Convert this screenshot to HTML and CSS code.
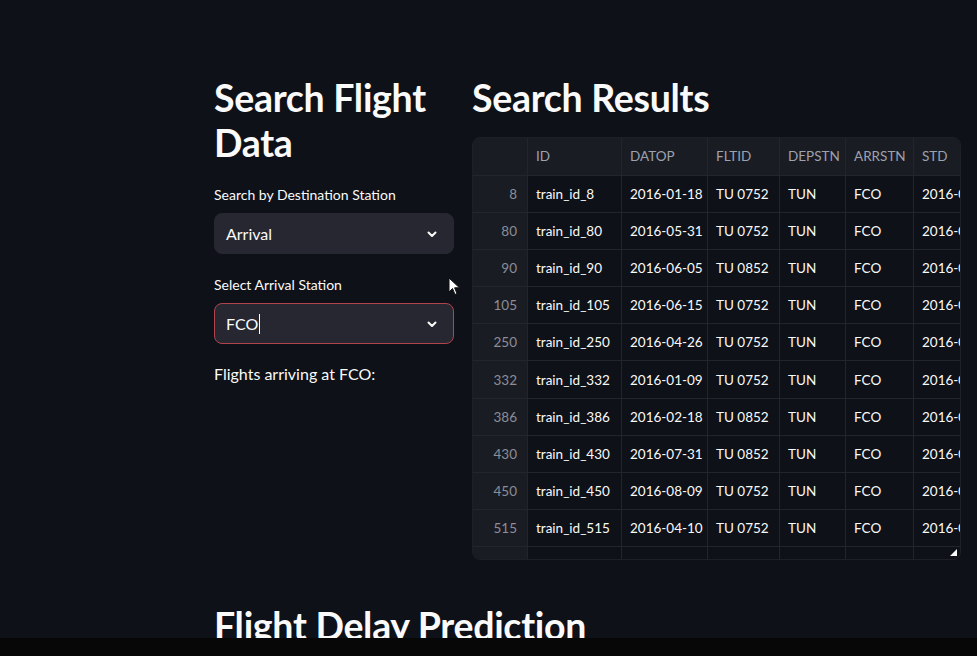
FILE: index.html
```html
<!DOCTYPE html>
<html>
<head>
<meta charset="utf-8">
<link rel="stylesheet" href="styles.css">
</head>
<body>
<div class="app">
  <main class="main">
    <div class="columns">
      <section class="col-left">
        <h2 class="heading">Search Flight Data</h2>
        <label class="label">Search by Destination Station</label>
        <div class="select">
          <span class="select-value">Arrival</span>
          <svg class="chevron" width="14" height="14" viewBox="0 0 14 14"><path d="M3.5 5.5 L7 9 L10.5 5.5" fill="none" stroke="#fafafa" stroke-width="2" stroke-linecap="round" stroke-linejoin="round"/></svg>
        </div>
        <label class="label label-second">Select Arrival Station</label>
        <div class="select select-focus">
          <span class="select-value">FCO<span class="caret"></span></span>
          <svg class="chevron" width="14" height="14" viewBox="0 0 14 14"><path d="M3.5 5.5 L7 9 L10.5 5.5" fill="none" stroke="#fafafa" stroke-width="2" stroke-linecap="round" stroke-linejoin="round"/></svg>
        </div>
        <p class="text">Flights arriving at FCO:</p>
      </section>
      <section class="col-right">
        <h2 class="heading">Search Results</h2>
        <div class="table">
          <div class="row head">
            <div class="cell idx"></div><div class="cell">ID</div><div class="cell">DATOP</div><div class="cell">FLTID</div><div class="cell">DEPSTN</div><div class="cell">ARRSTN</div><div class="cell">STD</div>
          </div>
          <div class="row"><div class="cell idx">8</div><div class="cell">train_id_8</div><div class="cell">2016-01-18</div><div class="cell">TU 0752</div><div class="cell">TUN</div><div class="cell">FCO</div><div class="cell">2016-01-18</div></div>
          <div class="row"><div class="cell idx">80</div><div class="cell">train_id_80</div><div class="cell">2016-05-31</div><div class="cell">TU 0752</div><div class="cell">TUN</div><div class="cell">FCO</div><div class="cell">2016-05-31</div></div>
          <div class="row"><div class="cell idx">90</div><div class="cell">train_id_90</div><div class="cell">2016-06-05</div><div class="cell">TU 0852</div><div class="cell">TUN</div><div class="cell">FCO</div><div class="cell">2016-06-05</div></div>
          <div class="row"><div class="cell idx">105</div><div class="cell">train_id_105</div><div class="cell">2016-06-15</div><div class="cell">TU 0752</div><div class="cell">TUN</div><div class="cell">FCO</div><div class="cell">2016-06-15</div></div>
          <div class="row"><div class="cell idx">250</div><div class="cell">train_id_250</div><div class="cell">2016-04-26</div><div class="cell">TU 0752</div><div class="cell">TUN</div><div class="cell">FCO</div><div class="cell">2016-04-26</div></div>
          <div class="row"><div class="cell idx">332</div><div class="cell">train_id_332</div><div class="cell">2016-01-09</div><div class="cell">TU 0752</div><div class="cell">TUN</div><div class="cell">FCO</div><div class="cell">2016-01-09</div></div>
          <div class="row"><div class="cell idx">386</div><div class="cell">train_id_386</div><div class="cell">2016-02-18</div><div class="cell">TU 0852</div><div class="cell">TUN</div><div class="cell">FCO</div><div class="cell">2016-02-18</div></div>
          <div class="row"><div class="cell idx">430</div><div class="cell">train_id_430</div><div class="cell">2016-07-31</div><div class="cell">TU 0852</div><div class="cell">TUN</div><div class="cell">FCO</div><div class="cell">2016-07-31</div></div>
          <div class="row"><div class="cell idx">450</div><div class="cell">train_id_450</div><div class="cell">2016-08-09</div><div class="cell">TU 0752</div><div class="cell">TUN</div><div class="cell">FCO</div><div class="cell">2016-08-09</div></div>
          <div class="row"><div class="cell idx">515</div><div class="cell">train_id_515</div><div class="cell">2016-04-10</div><div class="cell">TU 0752</div><div class="cell">TUN</div><div class="cell">FCO</div><div class="cell">2016-04-10</div></div>
          <div class="row"><div class="cell idx"></div><div class="cell"></div><div class="cell"></div><div class="cell"></div><div class="cell"></div><div class="cell"></div><div class="cell"></div></div>
          <span class="resize"></span>
        </div>
      </section>
    </div>
    <h2 class="heading heading-bottom">Flight Delay Prediction</h2>
  </main>
  <div class="bottom-bar"></div>
  <svg class="cursor" width="14" height="20" viewBox="0 0 14 20"><path d="M1 1 L1 15 L4.5 11.5 L7 17.5 L9 16.6 L6.6 10.8 L11.5 10.8 Z" fill="#ffffff" stroke="#111" stroke-width="1"/></svg>
</div>
</body>
</html>
```
FILE: styles.css
```css
* { box-sizing: border-box; }
html, body { margin: 0; padding: 0; }
body {
  background: #0e1117;
  color: #fafafa;
  font-family: "Lato", "Open Sans", sans-serif;
  width: 977px;
  height: 656px;
  overflow: hidden;
}
.app {
  position: relative;
  width: 977px;
  height: 656px;
  overflow: hidden;
}
.main {
  padding: 75px 0 0 214px;
  height: 638px;
  overflow: hidden;
}
.columns {
  display: flex;
  gap: 18px;
}
.col-left {
  flex: 0 0 240px;
  width: 240px;
  display: flex;
  flex-direction: column;
}
.col-right {
  flex: 1 1 auto;
  min-width: 0;
  display: flex;
  flex-direction: column;
}
.heading {
  margin: 0;
  font-size: 37.5px;
  font-weight: 700;
  line-height: 45px;
  letter-spacing: -0.3px;
  color: #fafafa;
  white-space: nowrap;
}
.col-left .heading { white-space: normal; }
.label {
  margin-top: 21px;
  font-size: 14px;
  line-height: 18px;
  color: #fafafa;
}
.label-second { margin-top: 22px; }
.select {
  margin-top: 9px;
  height: 41px;
  background: #262730;
  border-radius: 8px;
  border: 1px solid #262730;
  display: flex;
  align-items: center;
  justify-content: space-between;
  padding: 0 14px 0 11px;
}
.select-focus {
  border-color: #b2444c;
}
.select-value {
  font-size: 16px;
  color: #fafafa;
  display: flex;
  align-items: center;
}
.caret {
  display: inline-block;
  width: 1px;
  height: 20px;
  background: #fafafa;
  margin-left: 1px;
}
.chevron { display: block; }
.text {
  margin: 20px 0 0;
  font-size: 16px;
  line-height: 20px;
  color: #fafafa;
}
.table {
  position: relative;
  margin-top: 17px;
  width: 489px;
  height: 423px;
  border: 1px solid #1e2028;
  border-radius: 8px;
  overflow: hidden;
  background: #0e1117;
}
.row {
  display: grid;
  grid-template-columns: 55px 94px 86px 72px 66px 68px 100px;
  height: 37.2px;
  border-bottom: 1px solid #23252d;
}
.row.head {
  height: 37.5px;
  background: #1a1c24;
}
.cell {
  display: flex;
  align-items: center;
  padding: 0 8px;
  font-size: 13.5px;
  white-space: nowrap;
  overflow: hidden;
  border-right: 1px solid #23252d;
  color: #fafafa;
}
.row.head .cell { color: #9da2ae; }
.cell.idx {
  justify-content: flex-end;
  background: #1a1c24;
  color: #8b8e97;
  padding-right: 10px;
}
.resize {
  position: absolute;
  right: 3px;
  bottom: 3px;
  width: 0;
  height: 0;
  border-left: 7px solid transparent;
  border-bottom: 7px solid #fafafa;
}
.heading-bottom {
  margin-top: 43px;
}
.bottom-bar {
  position: absolute;
  left: 0;
  bottom: 0;
  width: 977px;
  height: 18px;
  background: #070707;
}
.cursor {
  position: absolute;
  left: 448px;
  top: 277px;
}
```
